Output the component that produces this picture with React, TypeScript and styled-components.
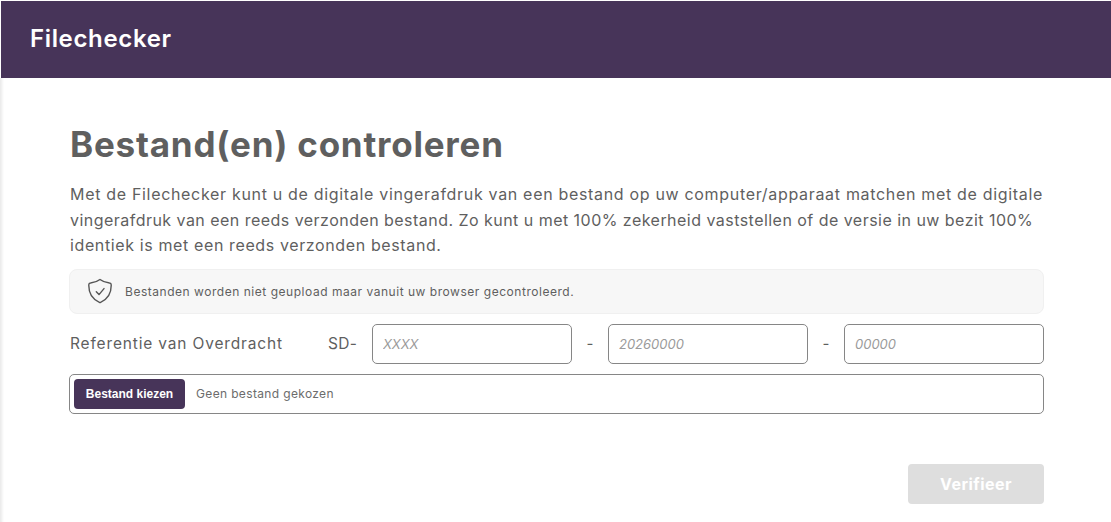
import React from 'react';
import styled, {createGlobalStyle} from 'styled-components';

const Global = createGlobalStyle`
  html, body {
    margin: 0;
    padding: 0;
    background: white;
    font-family: Inter, "Open Sans", sans-serif;
    color: #5f5f5f;
  }
  * { box-sizing: border-box; }
`;

const Page = styled.div`
  width: 1111px;
  height: 522px;
  overflow: hidden;
  padding: 1px 0 0 1px;
`;

const Header = styled.header`
  height: 77px;
  background: #473459;
  display: flex;
  align-items: center;
  padding: 0 0 2px 29px;
  color: white;
  font-size: 24px;
  font-weight: 600;
  letter-spacing: 0.65px;
`;

const Main = styled.main`
  height: 444px;
  margin-left: -1px;
  padding: 45px 67px 0 70px;
  box-shadow: inset 4px 0 3px -2px #e9e9e9;
`;

const Title = styled.h1`
  margin: 0;
  font-size: 35px;
  line-height: 42px;
  font-weight: 700;
  color: #5f5f5f;
  letter-spacing: 0.78px;
`;

const Intro = styled.p`
  margin: 17px 0 0;
  font-size: 16px;
  line-height: 25.6px;
  font-weight: 400;
  white-space: nowrap;
`;

const IntroLine = styled.span<{$tracking: number}>`
  display: block;
  letter-spacing: ${p => p.$tracking}px;
`;

const Notice = styled.div`
  margin: 10px 0 0 -1px;
  height: 45px;
  background: #f7f7f7;
  border: 1px solid #f0f0f0;
  border-radius: 8px;
  display: flex;
  align-items: center;
  gap: 11px;
  padding-left: 18px;
  font-size: 12px;
  letter-spacing: 0.53px;
`;

const Reference = styled.div`
  margin-top: 10px;
  display: flex;
  align-items: center;
  height: 40px;
`;

const RefLabel = styled.span`
  width: 258px;
  font-size: 15.5px;
  letter-spacing: 0.84px;
`;

const Prefix = styled.span`
  width: 44px;
  font-size: 15.5px;
  letter-spacing: 0.3px;
`;

const Field = styled.input`
  flex: 1;
  min-width: 0;
  height: 40px;
  border: 1px solid #868686;
  border-radius: 5px;
  padding: 0 10px;
  font-family: inherit;
  font-size: 13px;
  background: white;
  &::placeholder {
    color: #9a9a9a;
    font-style: italic;
    opacity: 1;
  }
`;

const Dash = styled.span`
  width: 36px;
  text-align: center;
  font-size: 15px;
`;

const FileBox = styled.div`
  margin: 10px 0 0 -1px;
  height: 40px;
  border: 1px solid #868686;
  border-radius: 5px;
  display: flex;
  align-items: center;
  padding-left: 4px;
  gap: 11px;
  font-size: 12px;
  letter-spacing: 0.35px;
  color: #6c6c6c;
`;

const ChooseButton = styled.button`
  width: 111px;
  height: 30px;
  border: none;
  border-radius: 4px;
  background: #473459;
  color: white;
  font-family: "Liberation Sans", Arial, sans-serif;
  font-size: 12px;
  font-weight: 700;
  padding: 0;
`;

const Actions = styled.div`
  margin-top: 50px;
  display: flex;
  justify-content: flex-end;
`;

const VerifyButton = styled.button`
  width: 136px;
  height: 40px;
  border: none;
  border-radius: 4px;
  background: #dedede;
  color: white;
  font-family: inherit;
  font-size: 16px;
  font-weight: 700;
  letter-spacing: 0.45px;
`;

function ShieldIcon() {
  return (
    <svg width="26" height="26" viewBox="0 0 26 26" fill="none" stroke="#555" strokeWidth="1.4" strokeLinecap="round" strokeLinejoin="round">
      <path d="M12 1.5 C14.5 3.5 18 4.6 21.5 5 C22.6 5.1 23.2 5.8 23.2 6.8 C23.4 14 20.5 21 12.6 24.3 C12.2 24.5 11.8 24.5 11.4 24.3 C3.5 21 0.6 14 0.8 6.8 C0.8 5.8 1.4 5.1 2.5 5 C6 4.6 9.5 3.5 12 1.5 Z"/>
      <path d="M8.3 13.8 L11 16.6 L16 10.6"/>
    </svg>
  );
}

export default function App() {
  return (
    <Page>
      <Global/>
      <Header>Filechecker</Header>
      <Main>
        <Title>Bestand(en) controleren</Title>
        <Intro>
          <IntroLine $tracking={0.68}>Met de Filechecker kunt u de digitale vingerafdruk van een bestand op uw computer/apparaat matchen met de digitale</IntroLine>
          <IntroLine $tracking={0.465}>vingerafdruk van een reeds verzonden bestand. Zo kunt u met 100% zekerheid vaststellen of de versie in uw bezit 100%</IntroLine>
          <IntroLine $tracking={0.62}>identiek is met een reeds verzonden bestand.</IntroLine>
        </Intro>
        <Notice>
          <ShieldIcon/>
          Bestanden worden niet geupload maar vanuit uw browser gecontroleerd.
        </Notice>
        <Reference>
          <RefLabel>Referentie van Overdracht</RefLabel>
          <Prefix>SD-</Prefix>
          <Field placeholder="XXXX"/>
          <Dash>-</Dash>
          <Field placeholder="20260000"/>
          <Dash>-</Dash>
          <Field placeholder="00000"/>
        </Reference>
        <FileBox>
          <ChooseButton>Bestand kiezen</ChooseButton>
          Geen bestand gekozen
        </FileBox>
        <Actions>
          <VerifyButton>Verifieer</VerifyButton>
        </Actions>
      </Main>
    </Page>
  );
}
